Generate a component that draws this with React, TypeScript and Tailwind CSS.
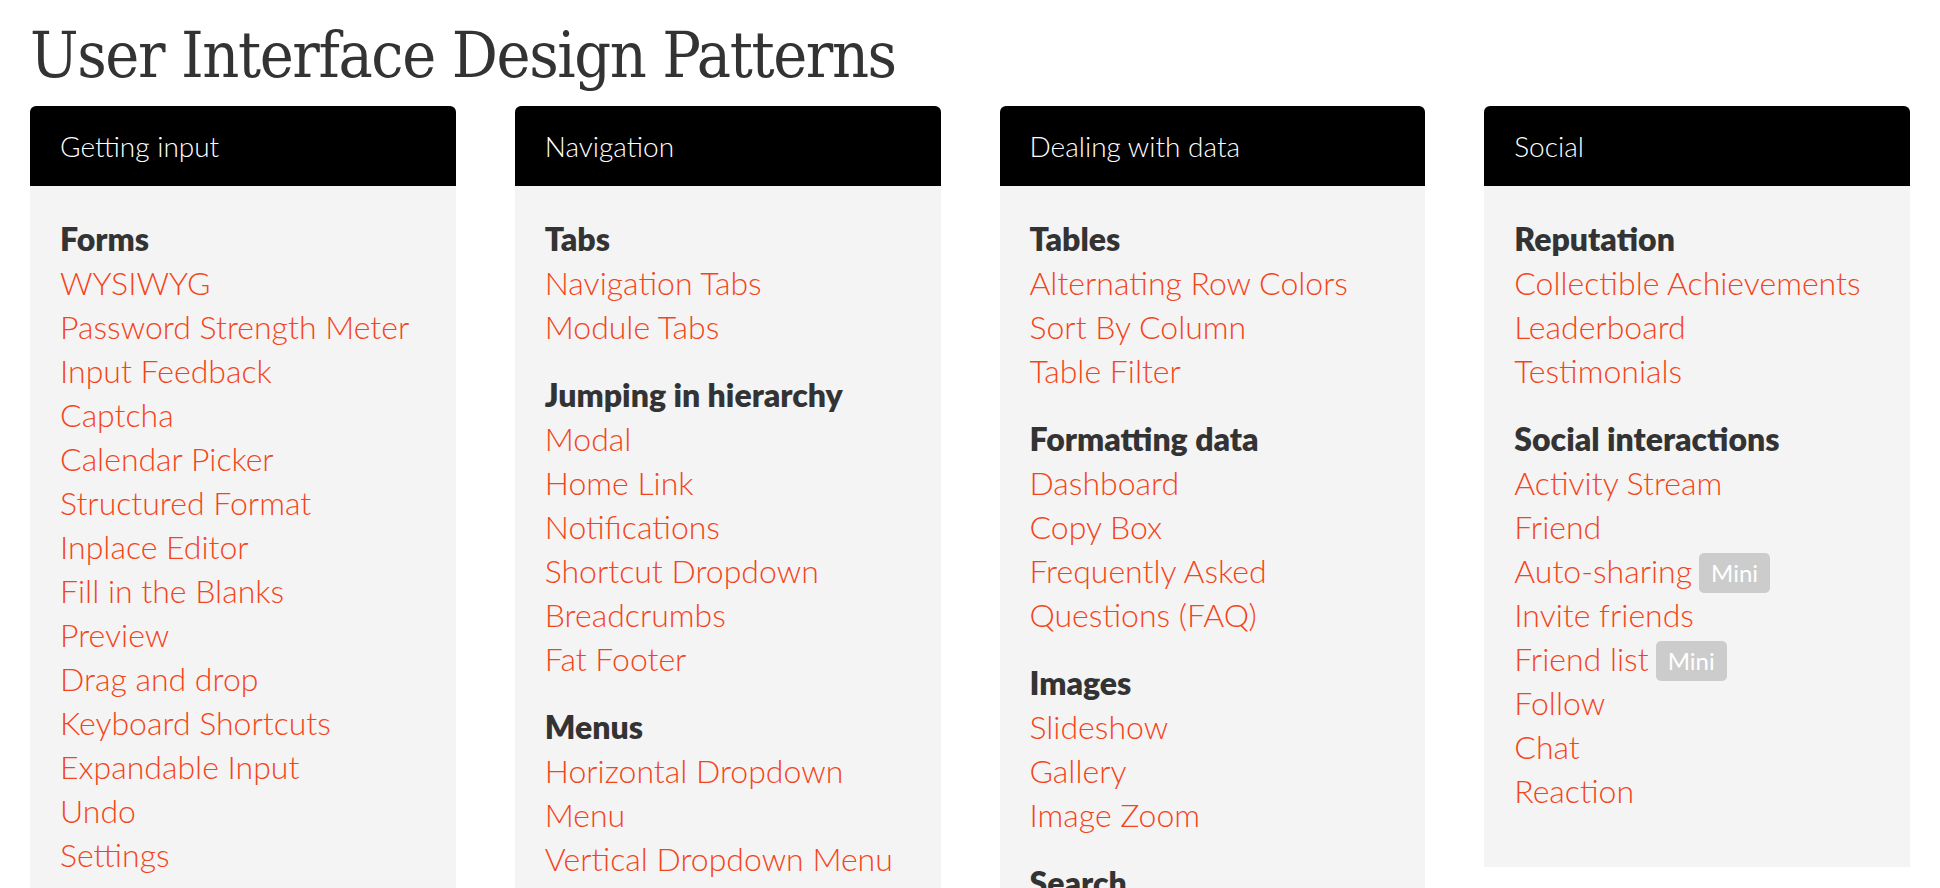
import React from 'react';

type Item = { label: string; mini?: boolean };
type Section = { title: string; items: Item[] };
type Column = { title: string; sections: Section[] };

const i = (label: string, mini = false): Item => ({ label, mini });

const columns: Column[] = [
  {
    title: 'Getting input',
    sections: [
      {
        title: 'Forms',
        items: [
          i('WYSIWYG'),
          i('Password Strength Meter'),
          i('Input Feedback'),
          i('Captcha'),
          i('Calendar Picker'),
          i('Structured Format'),
          i('Inplace Editor'),
          i('Fill in the Blanks'),
          i('Preview'),
          i('Drag and drop'),
          i('Keyboard Shortcuts'),
          i('Expandable Input'),
          i('Undo'),
          i('Settings'),
          i('Morphing Controls'),
          i('Rule Builder'),
          i('Good Defaults'),
        ],
      },
    ],
  },
  {
    title: 'Navigation',
    sections: [
      { title: 'Tabs', items: [i('Navigation Tabs'), i('Module Tabs')] },
      {
        title: 'Jumping in hierarchy',
        items: [
          i('Modal'),
          i('Home Link'),
          i('Notifications'),
          i('Shortcut Dropdown'),
          i('Breadcrumbs'),
          i('Fat Footer'),
        ],
      },
      {
        title: 'Menus',
        items: [i('Horizontal Dropdown Menu'), i('Vertical Dropdown Menu'), i('Accordion Menu')],
      },
    ],
  },
  {
    title: 'Dealing with data',
    sections: [
      { title: 'Tables', items: [i('Alternating Row Colors'), i('Sort By Column'), i('Table Filter')] },
      {
        title: 'Formatting data',
        items: [i('Dashboard'), i('Copy Box'), i('Frequently Asked Questions (FAQ)')],
      },
      { title: 'Images', items: [i('Slideshow'), i('Gallery'), i('Image Zoom')] },
      { title: 'Search', items: [i('Search Filters'), i('Autocomplete')] },
    ],
  },
  {
    title: 'Social',
    sections: [
      {
        title: 'Reputation',
        items: [i('Collectible Achievements'), i('Leaderboard'), i('Testimonials')],
      },
      {
        title: 'Social interactions',
        items: [
          i('Activity Stream'),
          i('Friend'),
          i('Auto-sharing', true),
          i('Invite friends'),
          i('Friend list', true),
          i('Follow'),
          i('Chat'),
          i('Reaction'),
        ],
      },
    ],
  },
];

const PatternCard: React.FC<{ column: Column }> = ({ column }) => (
  <div>
    <div className="h-[80px] bg-black rounded-t-[6px] px-[30px] flex items-center">
      <h2 className="text-[28px] leading-[42px] font-light text-white">{column.title}</h2>
    </div>
    <div className="bg-[#f4f4f4] px-[30px] pt-[31px] pb-[30px]">
      {column.sections.map(section => (
        <div key={section.title} className="mb-[24px]">
          <h3 className="text-[32px] leading-[44px] font-extrabold text-[#333]">{section.title}</h3>
          <ul>
            {section.items.map(item => (
              <li key={item.label} className="text-[32px] leading-[44px] font-light">
                <a href="#" className="text-[#f4441a]">
                  {item.label}
                </a>
                {item.mini && (
                  <span className="inline-block ml-[7px] px-[12px] rounded-[5px] bg-[#cccccc] text-white text-[24px] leading-[40px] font-normal align-[1px]">
                    Mini
                  </span>
                )}
              </li>
            ))}
          </ul>
        </div>
      ))}
    </div>
  </div>
);

export default function App() {
  return (
    <div className="min-h-screen bg-white px-[30px] font-['Lato','Open_Sans',sans-serif]">
      <h1 className="pt-[17px] mb-[12px] text-[64px] leading-[77px] tracking-[-1.4px] text-[#333] font-['DejaVu_Serif','Liberation_Serif',serif] [font-stretch:condensed]">
        User Interface Design Patterns
      </h1>
      <div className="grid grid-cols-4 gap-x-[59px] items-start">
        {columns.map(c => (
          <PatternCard key={c.title} column={c} />
        ))}
      </div>
    </div>
  );
}
